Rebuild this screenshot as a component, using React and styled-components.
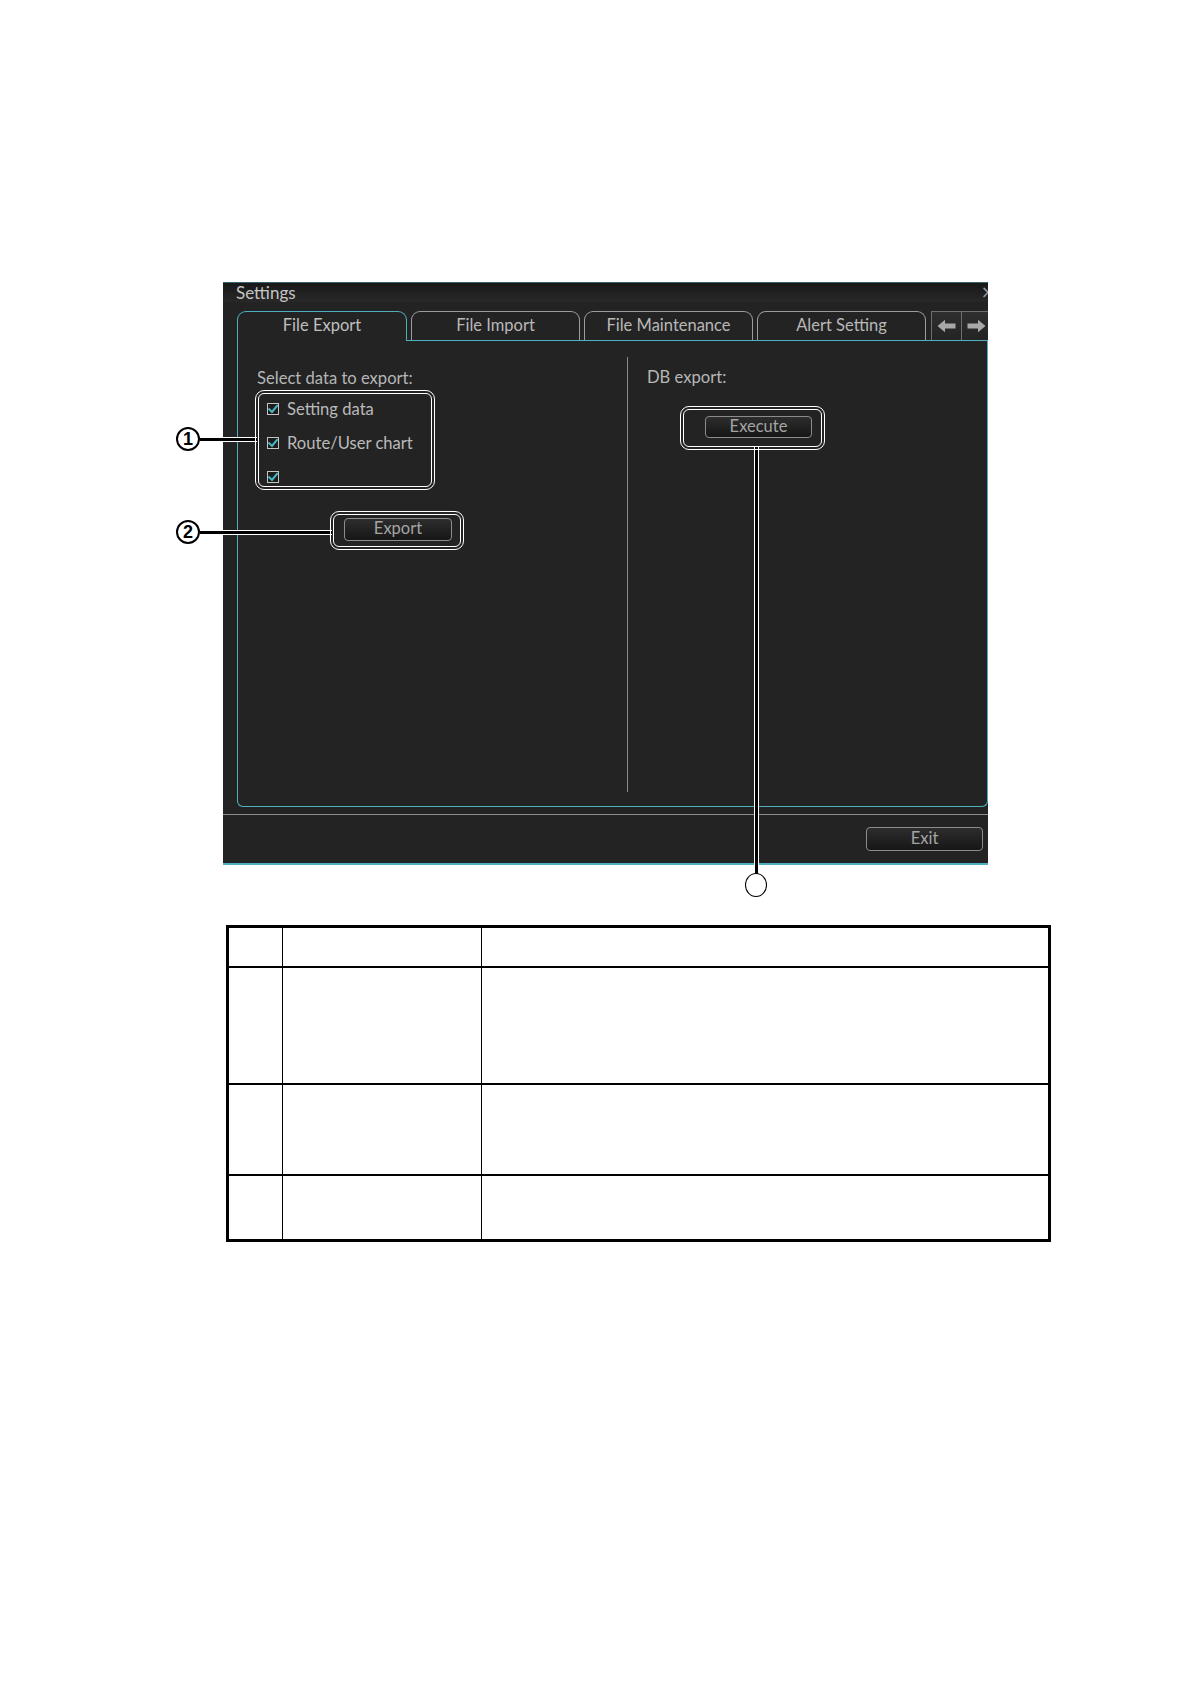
import React from "react";
import styled, { createGlobalStyle } from "styled-components";

const Global = createGlobalStyle`
  html, body { margin: 0; padding: 0; background: #ffffff; }
  body { font-family: "Lato", "Liberation Sans", sans-serif; }
  * { box-sizing: border-box; }
`;

const TEAL = "#4fb0bd";

const Page = styled.div`
  display: flex;
  flex-direction: column;
  align-items: flex-start;
  padding: 282px 0 0 223px;
  min-height: 1684px;
`;

const Figure = styled.div`
  position: relative;
`;

const Dialog = styled.div`
  width: 765px;
  height: 583px;
  background: #232323;
  display: flex;
  flex-direction: column;
  overflow: hidden;
  border-top: 1px solid #3a6469;
  border-bottom: 2px solid ${TEAL};
  font-family: "Lato", "Liberation Sans", sans-serif;
`;

const TitleBar = styled.div`
  height: 19px;
  display: flex;
  align-items: center;
  justify-content: space-between;
  padding-left: 13px;
  background: linear-gradient(#181818, #282828);
`;

const Title = styled.span`
  color: #c4c4c4;
  font-size: 17px;
  line-height: 19px;
`;

const Close = styled.span`
  color: #9a9a9a;
  font-size: 17px;
  line-height: 19px;
  margin-right: -7px;
  font-family: "DejaVu Sans", sans-serif;
`;

const TabRow = styled.div`
  margin: 9px 0 0 14px;
  height: 30px;
  display: flex;
  align-items: flex-end;
  gap: 4px;
  border-bottom: 1px solid ${TEAL};
`;

const Tab = styled.div`
  flex: none;
  width: ${(p) => (p.$active ? 170 : 169)}px;
  height: ${(p) => (p.$active ? 30 : 29)}px;
  margin-bottom: ${(p) => (p.$active ? -1 : 0)}px;
  border: 1px solid ${(p) => (p.$active ? TEAL : "#9c9c9c")};
  border-bottom: none;
  border-radius: 9px 9px 0 0;
  background: #232323;
  color: ${(p) => (p.$active ? "#bfbfbf" : "#b8b8b8")};
  font-size: 16.5px;
  display: flex;
  align-items: center;
  justify-content: center;
  padding-bottom: ${(p) => (p.$active ? 3 : 2)}px;
  position: relative;
  z-index: ${(p) => (p.$active ? 1 : 0)};
`;

const ArrowGroup = styled.div`
  flex: none;
  display: flex;
  height: 29px;
  margin-left: 1px;
`;

const ArrowButton = styled.div`
  width: ${(p) => p.$w}px;
  height: 29px;
  border: 1px solid #6e6e6e;
  border-bottom: none;
  background: linear-gradient(#2e2e2e, #242424);
  display: flex;
  align-items: center;
  justify-content: center;
  & + & { border-left: none; }
`;

const Panel = styled.div`
  margin-left: 14px;
  height: 466px;
  border: 1px solid ${TEAL};
  border-top: none;
  border-radius: 0 0 6px 6px;
  display: grid;
  grid-template-columns: 389px 1px 1fr;
`;

const LeftCol = styled.div`
  padding: 27px 0 0 19px;
  display: flex;
  flex-direction: column;
  align-items: flex-start;
`;

const RightCol = styled.div`
  padding: 26px 0 0 19px;
  display: flex;
  flex-direction: column;
  align-items: flex-start;
`;

const Divider = styled.div`
  background: #8a8a8a;
  margin: 16px 0 14px;
`;

const Heading = styled.div`
  color: #b6b6b6;
  font-size: 16.6px;
  line-height: 20px;
  height: 20px;
`;

const CheckList = styled.div`
  margin-top: 3px;
  display: flex;
  flex-direction: column;
`;

const CheckRow = styled.div`
  height: 34px;
  display: flex;
  align-items: center;
  gap: 8px;
  padding-left: 10px;
  padding-top: 1px;
  color: #bababa;
  font-size: 16.6px;
`;

const Box = styled.span`
  width: 12px;
  height: 12px;
  border: 1px solid #c4c4c4;
  background: #1c1c1c;
  display: flex;
  align-items: center;
  justify-content: center;
  flex: none;
`;

const Button = styled.button`
  width: ${(p) => p.$w}px;
  height: ${(p) => p.$h}px;
  margin: ${(p) => p.$m || 0};
  padding: 0 0 2px;
  border: 1px solid #8c8c8c;
  border-radius: 4px;
  background: linear-gradient(#2d2d2d, #161616);
  color: #a4a4a4;
  font-family: "Lato", "Liberation Sans", sans-serif;
  font-size: 16.5px;
  line-height: 1;
  display: flex;
  align-items: center;
  justify-content: center;
`;

const Separator = styled.div`
  height: 1px;
  margin-top: 7px;
  background: #8e8e8e;
`;

const Footer = styled.div`
  flex: 1;
  display: flex;
  justify-content: flex-end;
  align-items: flex-start;
  padding: 12px 5px 0 0;
`;

/* ---------- annotation overlay ---------- */

const Callout = styled.div`
  position: absolute;
  left: ${(p) => p.$x}px;
  top: ${(p) => p.$y}px;
  width: ${(p) => p.$w}px;
  height: ${(p) => p.$h}px;
  border: 4px double #ffffff;
  border-radius: 9px;
  pointer-events: none;
`;

const HLeader = styled.div`
  position: absolute;
  left: ${(p) => p.$x}px;
  top: ${(p) => p.$y - 2.5}px;
  width: ${(p) => p.$w}px;
  height: 5px;
  background: #000;
  border-top: 1.5px solid #fff;
  border-bottom: 1.5px solid #fff;
`;

const VLeader = styled.div`
  position: absolute;
  left: ${(p) => p.$x - 2.5}px;
  top: ${(p) => p.$y}px;
  width: 5px;
  height: ${(p) => p.$h}px;
  background: #000;
  border-left: 1.5px solid #fff;
  border-right: 1.5px solid #fff;
`;

const NumCircle = styled.div`
  position: absolute;
  left: ${(p) => p.$cx - p.$dw / 2}px;
  top: ${(p) => p.$cy - p.$dh / 2}px;
  width: ${(p) => p.$dw}px;
  height: ${(p) => p.$dh}px;
  border-radius: 50%;
  border: ${(p) => p.$bw}px solid #000;
  background: #fff;
  display: flex;
  align-items: center;
  justify-content: center;
  color: #000;
  font-family: "Liberation Sans", "DejaVu Sans", sans-serif;
  font-weight: 700;
  font-size: 18px;
  line-height: 1;
`;

/* ---------- table ---------- */

const Table = styled.div`
  margin: 60px 0 0 3px;
  width: 825px;
  height: 317px;
  border: 3px solid #000;
  background: #fff;
  display: grid;
  grid-template-columns: 54px 199px 1fr;
  grid-template-rows: 40px 117px 91px 1fr;
`;

const Cell = styled.div`
  border-right: ${(p) => (p.$lastCol ? "none" : "1px solid #000")};
  border-bottom: ${(p) => (p.$lastRow ? "none" : "2px solid #000")};
`;

const Check = () => (
  <svg width="10" height="10" viewBox="0 0 10 10">
    <path d="M1.2 5.2 L4 8 L9 1.8" fill="none" stroke="#45b7c6" strokeWidth="2" strokeLinecap="square" />
  </svg>
);

const ArrowLeft = () => (
  <svg width="19" height="14" viewBox="0 0 19 14">
    <path d="M0.5 7 L8 0.8 L8 4.6 L18.5 4.6 L18.5 9.4 L8 9.4 L8 13.2 Z" fill="#a8a8a8" />
  </svg>
);

const ArrowRight = () => (
  <svg width="19" height="14" viewBox="0 0 19 14">
    <path d="M18.5 7 L11 0.8 L11 4.6 L0.5 4.6 L0.5 9.4 L11 9.4 L11 13.2 Z" fill="#a8a8a8" />
  </svg>
);

const tabs = ["File Export", "File Import", "File Maintenance", "Alert Setting"];
const checks = ["Setting data", "Route/User chart", ""];

export default function App() {
  return (
    <>
      <Global />
      <Page>
        <Figure>
          <Dialog>
            <TitleBar>
              <Title>Settings</Title>
              <Close>×</Close>
            </TitleBar>
            <TabRow>
              {tabs.map((t, i) => (
                <Tab key={t} $active={i === 0}>
                  {t}
                </Tab>
              ))}
              <ArrowGroup>
                <ArrowButton $w={31}>
                  <ArrowLeft />
                </ArrowButton>
                <ArrowButton $w={30}>
                  <ArrowRight />
                </ArrowButton>
              </ArrowGroup>
            </TabRow>
            <Panel>
              <LeftCol>
                <Heading>Select data to export:</Heading>
                <CheckList>
                  {checks.map((c, i) => (
                    <CheckRow key={i}>
                      <Box>
                        <Check />
                      </Box>
                      {c}
                    </CheckRow>
                  ))}
                </CheckList>
                <Button $w={108} $h={23} $m="25px 0 0 87px">
                  Export
                </Button>
              </LeftCol>
              <Divider />
              <RightCol>
                <Heading>DB export:</Heading>
                <Button $w={107} $h={22} $m="29px 0 0 58px">
                  Execute
                </Button>
              </RightCol>
            </Panel>
            <Separator />
            <Footer>
              <Button $w={117} $h={24}>
                Exit
              </Button>
            </Footer>
          </Dialog>

          <HLeader $x={-23} $y={157} $w={57} />
          <HLeader $x={-23} $y={250} $w={132} />
          <VLeader $x={533} $y={164} $h={428} />
          <Callout $x={32} $y={108} $w={180} $h={100} />
          <Callout $x={107} $y={229} $w={134} $h={39} />
          <Callout $x={457} $y={124} $w={145} $h={44} />
          <NumCircle $cx={-35} $cy={157} $dw={24} $dh={24} $bw={2}>1</NumCircle>
          <NumCircle $cx={-35} $cy={250} $dw={24} $dh={24} $bw={2}>2</NumCircle>
          <NumCircle $cx={533} $cy={603} $dw={22} $dh={24} $bw={1} />
        </Figure>

        <Table>
          {Array.from({ length: 12 }).map((_, i) => (
            <Cell key={i} $lastCol={i % 3 === 2} $lastRow={i >= 9} />
          ))}
        </Table>
      </Page>
    </>
  );
}
